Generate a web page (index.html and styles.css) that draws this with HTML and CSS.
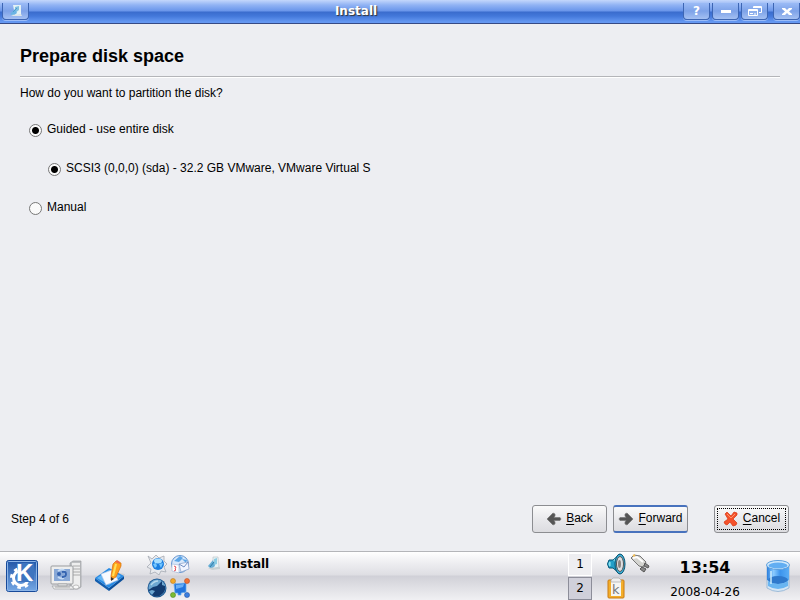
FILE: index.html
```
<!DOCTYPE html>
<html lang="en">
<head>
  <meta charset="utf-8">
  <title>Install</title>
  <link rel="stylesheet" href="styles.css">
</head>
<body>
  <header class="titlebar">
    <button class="tb-btn" aria-label="Window menu">
      <svg width="16" height="16" viewBox="0 0 16 16"><path d="M5 2h8v9l-6 2z" fill="#e4f2f5"/><path d="M7 4l4-1v4l-4 3z" fill="#7fbfe0"/><path d="M2 11l5-5 2 4-4 3z" fill="#6ab4e4"/><path d="M3 12l10-1 1 2H5z" fill="#dce5e9"/><path d="M5 9l4-4" stroke="#4e9ccb"/></svg>
    </button>
    <h1 class="title">Install</h1>
    <div class="tb-group">
      <button class="tb-btn">?</button>
      <button class="tb-btn" aria-label="Minimize">
        <svg width="12" height="12" viewBox="0 0 12 12"><path d="M1 5h10v3H1z" fill="#fff"/></svg>
      </button>
      <button class="tb-btn" aria-label="Restore">
        <svg width="16" height="12" viewBox="0 0 16 12"><path d="M6.500 3V1.500h8v6H12" fill="none" stroke="#fff"/><path d="M6 2.500h9" stroke="#fff"/><path d="M1.500 4.500h9v6h-9z" fill="#8fb0ec" stroke="#fff"/><path d="M1 5.500h10M3 8.500h3M7 9h2" stroke="#fff"/></svg>
      </button>
    </div>
    <button class="tb-btn" aria-label="Close">
      <svg width="12" height="12" viewBox="0 0 12 12"><path d="M1 3h3l2 2 2-2h3v1L8 6.500 11 9v1H8L6 8l-2 2H1V9l3-2.500L1 4z" fill="#fff"/></svg>
    </button>
  </header>

  <main class="page">
    <h2 class="heading">Prepare disk space</h2>
    <form class="partition">
      <p class="question">How do you want to partition the disk?</p>
      <label class="choice"><input type="radio" name="method" checked><span>Guided - use entire disk</span></label>
      <label class="choice nested"><input type="radio" name="disk" checked><span>SCSI3 (0,0,0) (sda) - 32.2 GB VMware, VMware Virtual S</span></label>
      <label class="choice"><input type="radio" name="method"><span>Manual</span></label>
    </form>
  </main>

  <footer class="steps">
    <span class="step-label">Step 4 of 6</span>
    <button class="btn">
      <svg width="16" height="16" viewBox="0 0 16 16"><path d="M1 8l6-6 2 1v2L8 6.500h6l1 1.500-1 1.500H8L9 11v2l-2 1z" fill="#555" stroke="#777" stroke-width=".7"/></svg>
      <span><u>B</u>ack</span>
    </button>
    <button class="btn btn-default">
      <svg width="16" height="16" viewBox="0 0 16 16"><path d="M15 8L9 2 7 3v2l1 1.500H2L1 8l1 1.500h6L7 11v2l2 1z" fill="#555" stroke="#777" stroke-width=".7"/></svg>
      <span><u>F</u>orward</span>
    </button>
    <button class="btn btn-cancel">
      <svg width="16" height="16" viewBox="0 0 16 16"><path d="M2 3l2-2 4 4 3-4 3 1v2l-4 4 4 4-1 2-3 1-3-4-3 3-2-1-1-2 4-3z" fill="#f4512b" stroke="#d9350f" stroke-width=".7"/><path d="M4 3l4 4 4-4" fill="none" stroke="#ff9468"/></svg>
      <span><u>C</u>ancel</span>
    </button>
  </footer>

  <nav class="taskbar">
    <div class="launchers">
      <button class="icon-btn" aria-label="K Menu">
        <svg width="32" height="32" viewBox="0 0 32 32">
          <defs><linearGradient id="kbg" x2="0" y2="1"><stop stop-color="#2056a8"/><stop offset="1" stop-color="#75a8e5"/></linearGradient></defs>
          <rect x=".500" y=".500" width="31" height="31" rx="2" fill="url(#kbg)" stroke="#174a9a"/>
          <rect x="1.500" y="1.500" width="29" height="29" rx="1" fill="none" stroke="#8cb5e8"/>
          <circle cx="15" cy="18" r="7.500" fill="none" stroke="#fff" stroke-width="3"/>
          <circle cx="15" cy="18" r="9.500" fill="none" stroke="#fff" stroke-width="3" stroke-dasharray="3.500 3.960"/>
          <path d="M11 3h17v17l-4 2H13z" fill="#3d74bf"/>
          <text x="10" y="21" class="k-letter">K</text>
        </svg>
      </button>
      <button class="icon-btn" aria-label="System">
        <svg width="32" height="32" viewBox="0 0 32 32">
          <path d="M20 3l3-2h8v26l-3 2h-8z" fill="#bfc1c3" stroke="#929699" stroke-width=".6"/><path d="M22 3h8v24h-8z" fill="#eee"/><path d="M23 6h7M23 9h7M23 12h7M23 15h7" stroke="#aaa"/>
          <rect x="1" y="6" width="22" height="18" rx="1" fill="#eee" stroke="#9b9da0"/><rect x="4" y="9" width="16" height="12" fill="#88a8d6"/>
          <path d="M8 11q6-4 8 3-2 7-8 3" fill="none" stroke="#c5dbf5" stroke-width="2"/><circle cx="9" cy="14" r="2" fill="#3564b0"/><path d="M12 12q4-1 4 2t-4 3" fill="none" stroke="#3564b0" stroke-width="2"/>
          <path d="M8 24h9v2H8zM2 26h20l2 3H4z" fill="#eee" stroke="#94979a" stroke-width=".6"/><path d="M5 27h15" stroke="#aaa"/>
          <ellipse cx="26" cy="27" rx="3" ry="2" fill="#f8f8f8" stroke="#999" stroke-width=".6"/>
        </svg>
      </button>
      <button class="icon-btn" aria-label="Desktop">
        <svg width="32" height="32" viewBox="0 0 32 32">
          <path d="M24 13l7 1-5 8z" fill="#bbb" opacity=".5"/><path d="M1 18l14 10v3L1 21z" fill="#135eae"/><path d="M15 28l15-12v3L15 31z" fill="#0b4f9b"/><path d="M1 18l14-10 15 8-15 12z" fill="#278ae4"/><path d="M3 18l12-8 12 6-12 9z" fill="#65b6f4"/>
          <path d="M7 14l11-4 6 10-12 5z" fill="#f8faff" stroke="#b9c8e3" stroke-width=".6"/>
          <path d="M17 16l2-12 3-3 5 2v3l-5 11-5 3z" fill="#ffa21c" stroke="#d66c0a" stroke-width=".7"/><path d="M22 4l-3 12" stroke="#ffe057" stroke-width="2"/><path d="M21 2l5 2v-2l-3-2z" fill="#ed694a"/><path d="M17 17v4l3-2z" fill="#333"/>
        </svg>
      </button>
    </div>

    <div class="quick">
      <button class="icon-btn" aria-label="Browser">
        <svg width="20" height="20" viewBox="0 0 20 20"><path d="M1 1l4 3 4-4 3 3 5-2v5l3 3-3 3 2 5-5-1-2 4-4-3-5 2 1-5-4-2 4-4z" fill="#e8eaee" stroke="#a5a9b2" stroke-width=".8"/><circle cx="11" cy="9" r="6" fill="#1c7fe0"/><ellipse cx="11" cy="6" rx="4" ry="2.500" fill="#a8deff"/><path d="M6 9l3-1 1 3-2 2zM12 9l4-1-2 5z" fill="#74c6ff"/></svg>
      </button>
      <button class="icon-btn" aria-label="Contacts">
        <svg width="20" height="20" viewBox="0 0 20 20"><circle cx="10" cy="9" r="8.500" fill="#d7e7fa" stroke="#6597d1"/><path d="M4 6l6-5 3 2-4 4zM12 4l5 1-1 3z" fill="#5ba5e7"/><path d="M2 9l7 1v8l-7-2z" fill="#fff" stroke="#a9bbda" stroke-width=".7"/><path d="M4 11l2 1-1 2 1 1-2 1" fill="none" stroke="#e14f5b"/><path d="M9 9l9-2 1 7-8 3z" fill="#f1f5ff" stroke="#879fc9" stroke-width=".7"/><path d="M9 9l5 3 4-5" fill="none" stroke="#718fc2"/></svg>
      </button>
      <button class="icon-btn" aria-label="Media player">
        <svg width="20" height="20" viewBox="0 0 20 20"><circle cx="10" cy="10" r="9.500" fill="#1c5791"/><circle cx="10" cy="10" r="8.500" fill="#6ea8d2"/><path d="M1.500 12L6 9l4-1 5-5v4l3 1q1 6-4 9-4 3-9 0l3-4-3-1-3 1z" fill="#123b70"/><path d="M4 7q3-4 7-4" fill="none" stroke="#b7d9ed" stroke-width="1.500"/></svg>
      </button>
      <button class="icon-btn" aria-label="Network">
        <svg width="20" height="20" viewBox="0 0 20 20"><path d="M3 3l14 14M17 3L3 17" stroke="#8b9eb5"/><path d="M4 6l12-1v9l-5 1v2H8v-2H5z" fill="#2374dc" stroke="#60aef4" stroke-width=".7"/><path d="M6 7l8-1-1 3-7 2z" fill="#6aaff5"/><circle cx="3" cy="3" r="2.500" fill="#f4a927" stroke="#b77822" stroke-width=".6"/><circle cx="17" cy="3" r="2.500" fill="#f17232" stroke="#bf4c20" stroke-width=".6"/><circle cx="3" cy="17" r="2.500" fill="#7cbc32" stroke="#538827" stroke-width=".6"/><circle cx="17" cy="17" r="2.500" fill="#3b7fe0" stroke="#2857a5" stroke-width=".6"/></svg>
      </button>
    </div>

    <button class="task">
      <svg width="16" height="16" viewBox="0 0 16 16"><path d="M7 1h5l1 10-6 2z" fill="#e8f2f4" stroke="#b5c0c4" stroke-width=".6"/><path d="M8 3l3-1v6l-3 1z" fill="#8acce4"/><path d="M2 10l5-6 2 6-4 3z" fill="#65aed6"/><path d="M2 12l12-1v2l-8 1z" fill="#c7d0d2"/><path d="M4 11l4-5" stroke="#307da8"/></svg>
      <span>Install</span>
    </button>

    <div class="pager">
      <button class="desk">1</button>
      <button class="desk active">2</button>
    </div>

    <div class="tray">
      <button class="icon-btn" aria-label="Volume">
        <svg width="20" height="22" viewBox="0 0 20 22"><path d="M2 7h4l7-6v20l-7-6H2Q-1 11 2 7z" fill="#249fc8" stroke="#075575"/><path d="M3 9q-1 2 0 4M7 8l4-4" fill="none" stroke="#83dff1" stroke-width="2"/><ellipse cx="13" cy="11" rx="5" ry="10" fill="#3cb0d8" stroke="#0b5370"/><ellipse cx="13" cy="11" rx="3.500" ry="7.500" fill="#dfe0e2" stroke="#555"/><ellipse cx="12.500" cy="11" rx="1.500" ry="4" fill="#8b8583"/></svg>
      </button>
      <button class="icon-btn" aria-label="Power">
        <svg width="20" height="22" viewBox="0 0 20 22"><path d="M1 5l3-3 6 1 6 6-3 5-4-1z" fill="#d4d4d0" stroke="#777"/><path d="M3 5l4-1 6 5" fill="none" stroke="#fff" stroke-width="2"/><path d="M15 10l4 3-1 2-4-2zM12 14l4 2-2 3-4-3z" fill="#888" stroke="#555"/><path d="M3 3l2-1" stroke="#f2bd56" stroke-width="2"/></svg>
      </button>
      <button class="icon-btn" aria-label="Clipboard">
        <svg width="20" height="22" viewBox="0 0 20 22"><rect x="1" y="3" width="16" height="18" rx="1" fill="#f3ae2a" stroke="#ca7b13"/><path d="M4 5h10v14H4z" fill="#f5f5f2"/><path d="M4 5V3l2-2h6l2 2v2z" fill="#eee" stroke="#aaa" stroke-width=".7"/><text x="5" y="17" class="clip-letter">k</text></svg>
      </button>
    </div>

    <div class="clock">
      <time class="time">13:54</time>
      <time class="date">2008-04-26</time>
    </div>

    <button class="icon-btn" aria-label="Trash">
      <svg width="26" height="32" viewBox="0 0 26 32">
        <defs><linearGradient id="bin"><stop stop-color="#2a7edd"/><stop offset=".3" stop-color="#8bcbff"/><stop offset=".6" stop-color="#3c94ed"/><stop offset="1" stop-color="#5aadf5"/></linearGradient></defs>
        <path d="M2 5v23q11 7 22 0V5z" fill="#d5e6f5" stroke="#83a9cf" stroke-width=".7"/>
        <path d="M2 5v15q11 7 22 0V5z" fill="url(#bin)"/><ellipse cx="13" cy="20" rx="10" ry="4" fill="#2f79cc"/><path d="M3 21q10 6 20 0v5q-10 6-20 0z" fill="#69b5f1"/>
        <ellipse cx="13" cy="5" rx="11.500" ry="4.500" fill="#d2eafc" stroke="#5c9edb"/><ellipse cx="13" cy="5.500" rx="9.500" ry="3" fill="#62aef2"/><path d="M6 11v13" stroke="#d5f2ff" stroke-width="2" opacity=".7"/>
      </svg>
    </button>
  </nav>
</body>
</html>
```
FILE: styles.css
```
* {
  box-sizing: border-box;
}
body {
  margin: 0;
  min-height: 100vh;
  display: flex;
  flex-direction: column;
  background: #edeef2;
  color: #000;
  font-family: "Liberation Sans", Arial, sans-serif;
  font-size: 12px;
  line-height: 16px;
}
button {
  font: inherit;
  color: inherit;
  padding: 0;
}
svg {
  display: block;
}

/* window title bar */
.titlebar {
  display: flex;
  align-items: flex-start;
  gap: 5px;
  height: 24px;
  padding: 3px 0 0 2px;
  background: linear-gradient(#c4d7fb 0, #91b3f4 5px, #6995ea 11px, #3a6ccd 12px, #4378da 16px, #6598f2 22px);
  border-bottom: 1px solid #364a85;
}
.title {
  flex: 1;
  margin: 0;
  text-align: center;
  color: #fff;
  font: bold 12px/16px "DejaVu Sans", sans-serif;
  text-shadow: 1px 1px 1px #333;
}
.tb-group {
  display: flex;
  gap: 2px;
}
.tb-btn {
  display: flex;
  align-items: center;
  justify-content: center;
  width: 27px;
  height: 17px;
  border: 1px solid #3d66b4;
  border-top: 0;
  border-radius: 0 0 4px 4px;
  background: linear-gradient(#9bbbf6, #7da2e8 50%, #a4c0f2);
  box-shadow: 0 1px 0 #9bbcf8;
  color: #fff;
  font: bold 12px/16px "DejaVu Sans", sans-serif;
}

/* installer page */
.page {
  flex: 1;
  padding: 20px 20px 0;
}
.heading {
  margin: 0;
  padding-bottom: 8px;
  border-bottom: 1px solid #b4b5b9;
  box-shadow: 0 1px 0 #fff;
  font-size: 18px;
  line-height: 24px;
}
.question {
  margin: 8px 0 20px;
}
.choice {
  display: flex;
  align-items: center;
  gap: 5px;
  margin: 0 0 23px 9px;
}
.nested {
  margin-left: 28px;
}
.choice input {
  appearance: none;
  width: 13px;
  height: 13px;
  margin: 3px 0 0;
  border: 1px solid #777;
  border-radius: 50%;
  background: #fafafa;
}
.choice input:checked {
  background: radial-gradient(circle, #000 3px, #fafafa 4px);
}

.steps {
  display: flex;
  align-items: center;
  padding: 0 11px 18px;
}
.step-label {
  flex: 1;
}
.btn {
  display: flex;
  align-items: center;
  justify-content: center;
  gap: 4px;
  width: 75px;
  height: 28px;
  margin-left: 6px;
  border: 1px solid #8c8d91;
  border-radius: 3px;
  background: linear-gradient(#fafafa, #e9e9ec 50%, #dcdce0);
}
.btn span {
  padding-bottom: 2px;
}
.btn u {
  text-underline-offset: 2px;
}
.btn-default {
  border-top: 2px solid #4872bd;
  border-bottom: 2px solid #4872bd;
}
.btn-cancel {
  margin-left: 26px;
  outline: 1px dotted #000;
  outline-offset: -4px;
}

/* panel */
.taskbar {
  display: flex;
  align-items: center;
  height: 49px;
  padding: 0 9px 0 6px;
  border-top: 1px solid #b4b5b9;
  background: linear-gradient(#fff 0, #efeff2 10px, #dedee3 23px, #d0d0d7 24px, #dedee3 34px, #f0f0f3 48px);
}
.icon-btn {
  border: 0;
  background: none;
}
.launchers {
  display: flex;
  gap: 12px;
}
.quick {
  display: grid;
  grid-template-columns: 20px 20px;
  gap: 3px;
  margin-left: 21px;
}
.task {
  flex: 1;
  align-self: flex-start;
  display: flex;
  align-items: center;
  gap: 5px;
  margin-left: 16px;
  padding-top: 4px;
  border: 0;
  background: none;
  font: bold 12px/16px "DejaVu Sans", sans-serif;
}
.pager {
  display: flex;
  flex-direction: column;
  gap: 1px;
  width: 24px;
}
.desk {
  height: 23px;
  border: 1px solid #fff;
  background: #eeeef1;
  font: 12px/16px "DejaVu Sans", sans-serif;
}
.active {
  border-color: #8c8d99;
  background: #d0d0da;
}
.tray {
  display: grid;
  grid-template-columns: 20px 20px;
  gap: 2px 3px;
  margin-left: 15px;
}
.tray .icon-btn {
  height: 22px;
}
.clock {
  display: flex;
  flex-direction: column;
  align-items: center;
  width: 115px;
  padding-right: 5px;
  font-family: "DejaVu Sans", sans-serif;
}
.time {
  padding-top: 8px;
  font-size: 16px;
  font-weight: bold;
  line-height: 20px;
}
.date {
  line-height: 20px;
  padding-top: 4px;
}
.k-letter {
  fill: #fff;
  font: bold 24px "Liberation Sans", sans-serif;
}
.clip-letter {
  fill: #777;
  font: 13px "DejaVu Sans", sans-serif;
}
```
